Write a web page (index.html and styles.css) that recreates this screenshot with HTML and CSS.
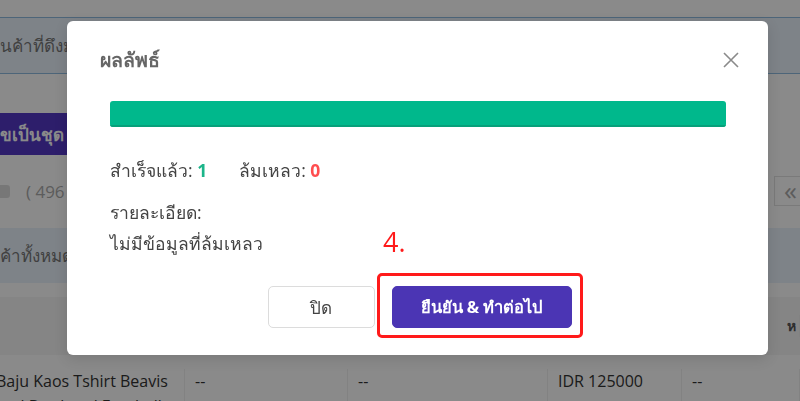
FILE: index.html
```html
<!DOCTYPE html>
<html lang="th">
<head>
  <meta charset="UTF-8" />
  <meta name="viewport" content="width=device-width, initial-scale=1.0" />
  <title>ผลลัพธ์</title>
  <link rel="stylesheet" href="styles.css">
</head>
<body>

  <!-- page behind the dialog -->
  <main class="page">
    <div class="notice">นค้าที่ดึงมาจากร้านค้าของคุณ</div>

    <div class="toolbar">
      <button class="bulk-btn">ขเป็นชุด</button>
    </div>

    <div class="select-row">
      <span class="check"></span>
      <span class="count">( 496 )</span>
      <span class="pager">«</span>
    </div>

    <div class="band">ค้าทั้งหมด</div>

    <div class="table">
      <div class="thead">
        <span></span><span></span><span></span><span></span><span class="th-last">ห</span>
      </div>
      <div class="trow">
        <span class="name">Baju Kaos Tshirt Beavis and Butthead Football</span>
        <span>--</span>
        <span>--</span>
        <span>IDR 125000</span>
        <span>--</span>
      </div>
    </div>
  </main>

  <!-- Result Modal -->
  <div class="overlay"></div>
  <div class="modal">
    <div class="modal-head">
      <h2>ผลลัพธ์</h2>
      <button class="close" aria-label="Close">
        <svg width="16" height="16" viewBox="0 0 16 16">
          <path d="M1 1L15 15M15 1L1 15" stroke="#8a8a8a" stroke-width="1.6" fill="none" />
        </svg>
      </button>
    </div>

    <div class="modal-body">
      <div class="progress"><div class="progress-fill" style="width: 100%"></div></div>

      <div class="stats">
        <span>สำเร็จแล้ว: <b class="ok">1</b></span>
        <span>ล้มเหลว: <b class="fail">0</b></span>
      </div>

      <p class="label">รายละเอียด:</p>
      <p class="empty">ไม่มีข้อมูลที่ล้มเหลว</p>
    </div>

    <div class="modal-foot">
      <button class="btn">ปิด</button>
      <button class="btn btn-primary">ยืนยัน &amp; ทำต่อไป</button>
    </div>

    <!-- step annotation -->
    <span class="step">4.</span>
    <span class="step-box"></span>
  </div>

</body>
</html>
```

FILE: styles.css
```css
body {
  margin: 0;
  background: #fff;
  font-family: 'Open Sans', 'Noto Sans', sans-serif;
  color: #333;
  overflow: hidden;
}

.page {
  padding-top: 17px;
}

.notice {
  height: 55px;
  line-height: 55px;
  background: #e9f3fc;
  border-top: 1px solid #8fbbe0;
  border-bottom: 1px solid #8fbbe0;
  font-size: 17px;
  color: #777;
  white-space: nowrap;
}

.toolbar {
  padding-top: 39px;
}

.bulk-btn {
  height: 42px;
  padding: 0 14px 0 0;
  border: none;
  border-radius: 0 4px 4px 0;
  background: #5338c6;
  color: #fff;
  font-family: inherit;
  font-size: 17px;
  font-weight: bold;
}

.select-row {
  display: flex;
  align-items: center;
  height: 32px;
  margin-top: 20px;
  color: #aaa;
  font-size: 17px;
}

.check {
  width: 16px;
  height: 13px;
  margin-left: -6px;
  border-radius: 3px;
  background: #ddd;
}

.count {
  margin-left: 16px;
}

.pager {
  margin-left: auto;
  width: 30px;
  height: 30px;
  margin-right: -4px;
  box-sizing: border-box;
  border: 1px solid #e2e2e2;
  color: #aaa;
  font-size: 26px;
  line-height: 26px;
  padding-left: 9px;
}

.band {
  height: 55px;
  line-height: 55px;
  margin-top: 21px;
  background: #e9f3fc;
  color: #777;
  font-size: 17px;
  white-space: nowrap;
}

.table {
  margin-top: 14px;
}

.thead,
.trow {
  display: grid;
  grid-template-columns: 185px 163px 200px 134px 1fr;
}

.thead {
  height: 58px;
  background: #f5f5f5;
}

.thead span,
.trow span {
  padding-left: 10px;
  border-right: 1px solid #f0f0f0;
}

.th-last {
  align-self: center;
  font-weight: bold;
  color: #555;
  font-size: 14px;
  padding-left: 105px !important;
}

.trow {
  font-size: 16px;
  line-height: 25px;
  padding-top: 14px;
}

.trow .name {
  padding-left: 0;
  margin-left: -4px;
}

/* Modal */
.overlay {
  position: fixed;
  inset: 0;
  background: rgba(0, 0, 0, 0.46);
}

.modal {
  position: fixed;
  left: 67px;
  top: 21px;
  width: 701px;
  height: 334px;
  box-sizing: border-box;
  background: #fff;
  border-radius: 6px;
  box-shadow: 0 4px 14px rgba(0, 0, 0, 0.12);
  padding: 28px 29px 27px 33px;
  display: flex;
  flex-direction: column;
}

.modal-head {
  display: flex;
  align-items: center;
  justify-content: space-between;
  height: 22px;
}

.modal-head h2 {
  margin: 0;
  font-size: 19.5px;
  font-weight: bold;
  color: #666;
}

.close {
  border: none;
  background: none;
  padding: 0;
  width: 16px;
  height: 16px;
  cursor: pointer;
}

.modal-body {
  padding: 30px 13px 0 10px;
  flex: 1;
}

.progress {
  height: 26px;
  border-radius: 3px;
  background: #eee;
  overflow: hidden;
}

.progress-fill {
  height: 100%;
  background: #00b88c;
  box-shadow: inset 0 -2px 0 #06a07a;
}

.stats {
  display: flex;
  gap: 32px;
  margin-top: 30px;
  font-size: 17.5px;
  color: #444;
}

.ok {
  color: #1cb58a;
}

.fail {
  color: #ff4d4f;
}

.label,
.empty {
  margin: 0;
  font-size: 17.5px;
  color: #444;
}

.label {
  margin-top: 14px;
}

.empty {
  margin-top: 3px;
}

.modal-foot {
  display: flex;
  justify-content: center;
  gap: 17px;
}

.btn {
  height: 42px;
  min-width: 107px;
  padding: 0 20px;
  border: 1px solid #dcdcdc;
  border-radius: 5px;
  background: #fff;
  color: #444;
  font-family: inherit;
  font-size: 17px;
}

.btn-primary {
  width: 180px;
  border-color: #4b35b4;
  background: #4b35b4;
  color: #fff;
  font-size: 16.5px;
  font-weight: bold;
}

.step {
  position: absolute;
  left: 316px;
  top: 204px;
  color: #ff1a1a;
  font-size: 27px;
  line-height: 34px;
}

.step-box {
  position: absolute;
  left: 310px;
  top: 252px;
  width: 206px;
  height: 65px;
  box-sizing: border-box;
  border: 3px solid #ff1a1a;
  border-radius: 5px;
}
```
